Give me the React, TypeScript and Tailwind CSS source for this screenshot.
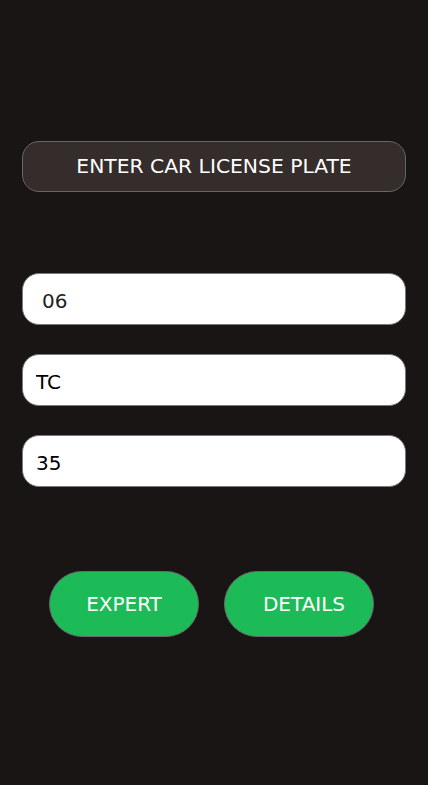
export default function App() {
  return (
    <div
      className="w-[428px] h-[785px] bg-[#191514] px-[22px] pt-[141px] flex flex-col"
      style={{ fontFamily: '"DejaVu Sans", Verdana, sans-serif' }}
    >
      <div className="h-[51px] rounded-[17px] bg-[#352c2c] border border-[#6b6464] flex items-center justify-center text-white text-[20.3px]">
        ENTER CAR LICENSE PLATE
      </div>
      <div className="mt-[81px] flex flex-col gap-[29px]">
        <input
          defaultValue="06"
          className="h-[52px] rounded-[17px] bg-white border border-[#7a7a7a] pl-[19px] pt-[3px] text-[20px] text-[#222] outline-none"
        />
        <input
          defaultValue="TC"
          className="h-[52px] rounded-[17px] bg-white border border-[#7a7a7a] pl-[13px] pt-[3px] text-[20px] text-black outline-none"
        />
        <input
          defaultValue="35"
          className="h-[52px] rounded-[17px] bg-white border border-[#7a7a7a] pl-[13px] pt-[3px] text-[20px] text-black outline-none"
        />
      </div>
      <div className="mt-[84px] flex justify-start pl-[27px] gap-[25px]">
        <button className="w-[150px] h-[66px] rounded-full bg-[#1dbb57] border border-[#6a6a6a] text-white text-[20px]">
          EXPERT
        </button>
        <button className="w-[150px] h-[66px] rounded-full bg-[#1dbb57] border border-[#6a6a6a] text-white text-[20px] pl-[10px]">
          DETAILS
        </button>
      </div>
    </div>
  );
}
